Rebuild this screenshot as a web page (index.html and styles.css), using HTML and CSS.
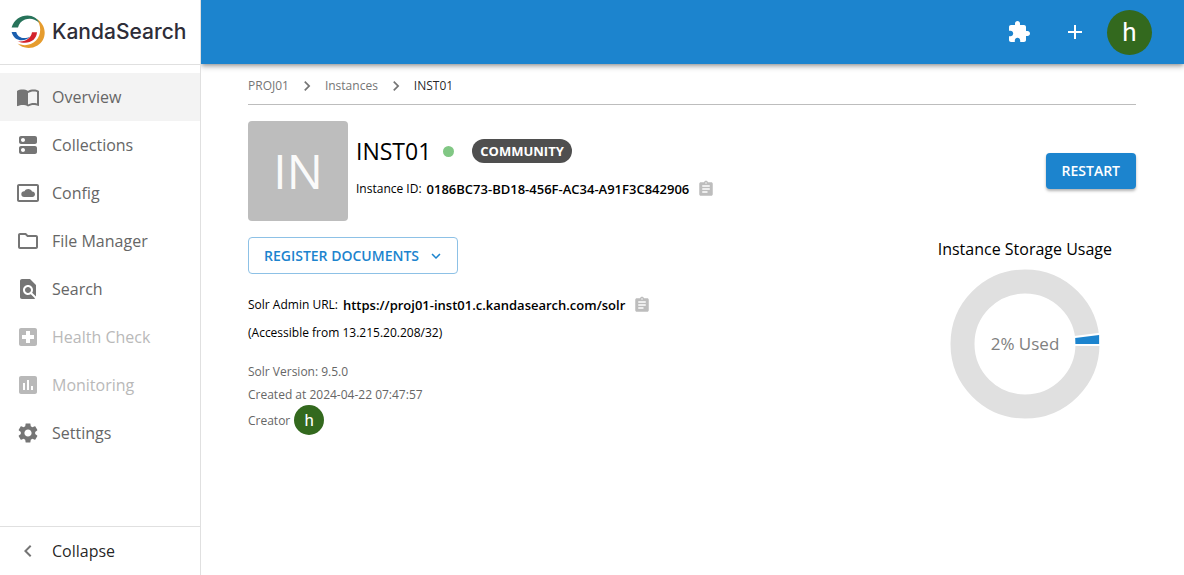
FILE: index.html
```html
<!DOCTYPE html>
<html lang="en">
<head>
<meta charset="utf-8">
<title>INST01 - KandaSearch</title>
<link rel="stylesheet" href="styles.css">
</head>
<body>
<div class="app">
  <aside class="sidebar">
    <a class="brand" href="#">
      <svg class="brand-mark" viewBox="0 0 34 34" aria-hidden="true">
        <path fill="#e69c2e" d="M25.500 3.800C36 10 36.500 24.500 26.500 30.500C19 35 10.500 32.800 6.500 28.600C12 31 20 31 25 25.500C30.500 19.500 30.500 10.500 25.500 3.800Z"/>
        <path fill="#27735a" d="M.6 12.600C3 4.500 9.500 .6 16.500 .6C22 .6 26.300 3.500 28.200 7.800C23.500 3.400 18.500 2.800 14 4.600C9.800 6.300 8 9 7 12.600Z"/>
        <path fill="#1b5fae" d="M.6 17H5.200C6.500 22.300 12.500 25 19.500 21.500C14.500 27 3.500 27.500 .6 17Z"/>
        <path fill="#d3232c" d="M26 17.300C25.500 25.800 16.500 30.500 6.500 26.200C14 27.500 20 23.500 21 17.300Z"/>
      </svg>
      <span class="brand-name">KandaSearch</span>
    </a>
    <nav class="nav">
      <a class="nav-item active" href="#"><svg class="icon" viewBox="0 0 24 24"><path d="M21 5c-1.110-.35-2.330-.5-3.500-.5-1.950 0-4.050.4-5.500 1.500-1.450-1.100-3.550-1.500-5.500-1.500S2.450 4.900 1 6v14.650c0 .25.25.5.5.5.1 0 .15-.05.25-.05C3.100 20.450 5.050 20 6.500 20c1.950 0 4.050.4 5.500 1.500 1.350-.85 3.800-1.500 5.500-1.500 1.650 0 3.350.3 4.750 1.050.1.050.15.050.25.050.25 0 .5-.25.5-.5V6c-.6-.45-1.250-.75-2-1zm0 13.500c-1.100-.35-2.300-.5-3.500-.5-1.700 0-4.150.65-5.500 1.500V8c1.350-.85 3.800-1.500 5.500-1.500 1.200 0 2.400.15 3.500.5v11.500z"/></svg>Overview</a>
      <a class="nav-item" href="#"><svg class="icon" viewBox="0 0 24 24"><path d="M19 13H5c-1.100 0-2 .9-2 2v4c0 1.100.9 2 2 2h14c1.100 0 2-.9 2-2v-4c0-1.100-.9-2-2-2zM7 19c-1.100 0-2-.9-2-2s.9-2 2-2 2 .9 2 2-.9 2-2 2zM19 3H5c-1.100 0-2 .9-2 2v4c0 1.100.9 2 2 2h14c1.100 0 2-.9 2-2V5c0-1.100-.9-2-2-2zM7 9c-1.100 0-2-.9-2-2s.9-2 2-2 2 .9 2 2-.9 2-2 2z"/></svg>Collections</a>
      <a class="nav-item" href="#"><svg class="icon" viewBox="0 0 24 24"><path d="M21 3H3c-1.100 0-2 .9-2 2v14c0 1.100.9 2 2 2h18c1.100 0 2-.9 2-2V5c0-1.100-.9-2-2-2zm0 16H3V5h18v14z"/><path d="M8.200 16h8.100c1.500 0 2.700-1.200 2.700-2.700s-1.200-2.700-2.700-2.700h-.3C15.600 9 14 8 12.200 8c-1.600 0-3 .9-3.700 2.200h-.3A3 3 0 0 0 5.300 13a3 3 0 0 0 2.900 3z"/></svg>Config</a>
      <a class="nav-item" href="#"><svg class="icon" viewBox="0 0 24 24"><path d="m9.170 6 2 2H20v10H4V6h5.170M10 4H4c-1.100 0-1.990.9-1.990 2L2 18c0 1.100.9 2 2 2h16c1.100 0 2-.9 2-2V8c0-1.100-.9-2-2-2h-8l-2-2z"/></svg>File Manager</a>
      <a class="nav-item" href="#"><svg class="icon" viewBox="0 0 24 24"><path d="M20 19.590V8l-6-6H6c-1.100 0-1.990.9-1.990 2L4 20c0 1.100.89 2 1.990 2H18c.45 0 .85-.15 1.190-.4l-4.430-4.430c-.8.52-1.740.83-2.760.83-2.760 0-5-2.240-5-5s2.240-5 5-5 5 2.240 5 5c0 1.020-.31 1.960-.83 2.750L20 19.590zM9 13c0 1.660 1.340 3 3 3s3-1.340 3-3-1.340-3-3-3-3 1.340-3 3z"/></svg>Search</a>
      <a class="nav-item disabled" aria-disabled="true"><svg class="icon" viewBox="0 0 24 24"><path d="M19 3H5c-1.100 0-1.990.9-1.990 2L3 19c0 1.100.9 2 2 2h14c1.100 0 2-.9 2-2V5c0-1.100-.9-2-2-2zm-1 11h-4v4h-4v-4H6v-4h4V6h4v4h4v4z"/></svg>Health Check</a>
      <a class="nav-item disabled" aria-disabled="true"><svg class="icon" viewBox="0 0 24 24"><path d="M19 3H5c-1.100 0-2 .9-2 2v14c0 1.100.9 2 2 2h14c1.100 0 2-.9 2-2V5c0-1.100-.9-2-2-2zM9 17H7v-7h2v7zm4 0h-2V7h2v10zm4 0h-2v-4h2v4z"/></svg>Monitoring</a>
      <a class="nav-item" href="#"><svg class="icon" viewBox="0 0 24 24"><path d="M19.140 12.940c.04-.3.060-.61.060-.94 0-.32-.020-.64-.070-.94l2.030-1.580c.18-.14.23-.41.120-.61l-1.920-3.320c-.12-.22-.37-.29-.59-.22l-2.390.96c-.5-.38-1.030-.7-1.620-.94l-.36-2.540c-.04-.24-.24-.41-.48-.41h-3.840c-.24 0-.43.17-.47.41l-.36 2.540c-.59.24-1.130.57-1.620.94l-2.390-.96c-.22-.08-.47 0-.59.22L2.740 8.870c-.12.21-.08.47.12.61l2.030 1.580c-.05.3-.09.63-.09.94s.02.64.07.94l-2.030 1.580c-.18.14-.23.41-.12.61l1.920 3.320c.12.22.37.29.59.22l2.390-.96c.5.38 1.030.7 1.620.94l.36 2.540c.05.24.24.41.48.41h3.840c.24 0 .44-.17.47-.41l.36-2.540c.59-.24 1.130-.56 1.620-.94l2.390.96c.22.08.47 0 .59-.22l1.920-3.320c.12-.22.07-.47-.12-.61l-2.010-1.580zM12 15.600c-1.980 0-3.600-1.620-3.600-3.600s1.620-3.600 3.600-3.600 3.600 1.620 3.600 3.600-1.620 3.600-3.600 3.600z"/></svg>Settings</a>
    </nav>
    <button class="collapse" type="button"><svg class="icon" viewBox="0 0 24 24"><path d="M15.410 7.410 14 6l-6 6 6 6 1.410-1.410L10.830 12z"/></svg>Collapse</button>
  </aside>

  <div class="page">
    <header class="topbar">
      <button class="icon-button" type="button" aria-label="Extensions"><svg class="icon" viewBox="0 0 24 24"><path d="M20.500 11H19V7c0-1.100-.9-2-2-2h-4V3.500C13 2.120 11.880 1 10.500 1S8 2.120 8 3.500V5H4c-1.100 0-1.990.9-1.990 2v3.800H3.500c1.490 0 2.700 1.210 2.700 2.700s-1.210 2.700-2.700 2.700H2V20c0 1.100.9 2 2 2h3.800v-1.500c0-1.490 1.210-2.700 2.700-2.700 1.490 0 2.700 1.210 2.700 2.700V22H17c1.100 0 2-.9 2-2v-4h1.500c1.380 0 2.500-1.120 2.500-2.500S21.880 11 20.500 11z"/></svg></button>
      <button class="icon-button" type="button" aria-label="Add"><svg class="icon" viewBox="0 0 24 24"><path d="M19 13h-6v6h-2v-6H5v-2h6V5h2v6h6v2z"/></svg></button>
      <button class="avatar avatar-large" type="button">h</button>
    </header>

    <main class="content">
      <nav class="breadcrumbs" aria-label="Breadcrumb">
        <a href="#">PROJ01</a>
        <svg class="chevron" viewBox="0 0 24 24"><path d="M10 6 8.590 7.410 13.170 12l-4.580 4.590L10 18l6-6z"/></svg>
        <a href="#">Instances</a>
        <svg class="chevron" viewBox="0 0 24 24"><path d="M10 6 8.590 7.410 13.170 12l-4.580 4.590L10 18l6-6z"/></svg>
        <span class="current">INST01</span>
      </nav>

      <section class="summary">
        <div class="tile">IN</div>
        <div class="identity">
          <div class="title-row">
            <h1 class="title">INST01</h1>
            <span class="status"></span>
            <span class="chip">COMMUNITY</span>
          </div>
          <div class="field">
            <span>Instance ID:</span>
            <strong class="value">0186BC73-BD18-456F-AC34-A91F3C842906</strong>
            <button class="copy" type="button" aria-label="Copy instance ID"><svg viewBox="0 0 24 24"><path d="M19 3h-4.180C14.400 1.840 13.300 1 12 1c-1.300 0-2.400.84-2.820 2H5c-1.100 0-2 .9-2 2v14c0 1.100.9 2 2 2h14c1.100 0 2-.9 2-2V5c0-1.100-.9-2-2-2zm-7 0c.55 0 1 .45 1 1s-.45 1-1 1-1-.45-1-1 .45-1 1-1zm2 14H7v-2h7v2zm3-4H7v-2h10v2zm0-4H7V7h10v2z"/></svg></button>
          </div>
        </div>
        <button class="restart" type="button">RESTART</button>
      </section>

      <div class="columns">
        <section class="details">
          <button class="register" type="button">REGISTER DOCUMENTS<svg class="caret" viewBox="0 0 24 24"><path d="M7.410 8.590 12 13.170l4.590-4.580L18 10l-6 6-6-6z"/></svg></button>
          <div class="field url">
            <span>Solr Admin URL:</span>
            <strong class="value">https://proj01-inst01.c.kandasearch.com/solr</strong>
            <button class="copy" type="button" aria-label="Copy URL"><svg viewBox="0 0 24 24"><path d="M19 3h-4.180C14.400 1.840 13.300 1 12 1c-1.300 0-2.400.84-2.820 2H5c-1.100 0-2 .9-2 2v14c0 1.100.9 2 2 2h14c1.100 0 2-.9 2-2V5c0-1.100-.9-2-2-2zm-7 0c.55 0 1 .45 1 1s-.45 1-1 1-1-.45-1-1 .45-1 1-1zm2 14H7v-2h7v2zm3-4H7v-2h10v2zm0-4H7V7h10v2z"/></svg></button>
          </div>
          <p class="note">(Accessible from 13.215.20.208/32)</p>
          <div class="meta">
            <p>Solr Version: 9.5.0</p>
            <p>Created at 2024-04-22 07:47:57</p>
            <p class="creator">Creator <span class="avatar avatar-small">h</span></p>
          </div>
        </section>

        <section class="storage">
          <h2 class="storage-title">Instance Storage Usage</h2>
          <svg class="donut" viewBox="0 0 150 150" role="img" aria-label="2% used">
            <circle cx="75" cy="75" r="62.500" fill="none" stroke="#e0e0e0" stroke-width="24"/>
            <path d="M124 67 151 63.500V77H124Z" fill="#fff"/>
            <path d="M125.200 69 149.100 66V75H125.400Z" fill="#1c84ce"/>
            <text x="75" y="81" text-anchor="middle">2% Used</text>
          </svg>
        </section>
      </div>
    </main>
  </div>
</div>
</body>
</html>
```
FILE: styles.css
```css
* {
  box-sizing: border-box;
}

body {
  margin: 0;
  background: #fff;
  color: rgba(0, 0, 0, 0.87);
  font-family: "Open Sans", "Noto Sans", sans-serif;
  font-size: 16px;
  line-height: 24px;
}

h1,
h2,
p {
  margin: 0;
  font-weight: 400;
}

a {
  color: inherit;
  text-decoration: none;
}

button {
  padding: 0;
  border: 0;
  background: none;
  color: inherit;
  font: inherit;
  cursor: pointer;
}

svg {
  display: block;
  flex: none;
  fill: currentColor;
}

.icon {
  width: 24px;
  height: 24px;
}

.app {
  display: flex;
  min-height: 100vh;
}

.sidebar {
  display: flex;
  flex: none;
  flex-direction: column;
  width: 201px;
  border-right: 1px solid #e0e0e0;
  background: #fff;
  z-index: 1;
}

.brand {
  display: flex;
  align-items: center;
  gap: 7px;
  height: 65px;
  padding: 0 11px;
  border-bottom: 1px solid #e0e0e0;
}

.brand-mark {
  width: 34px;
  height: 34px;
}

.brand-name {
  color: #2e2d38;
  font-family: Inter, sans-serif;
  font-size: 21px;
  font-weight: 500;
}

.nav {
  flex: 1;
  padding: 8px 0;
  color: #666;
}

.nav-item,
.collapse {
  display: flex;
  align-items: center;
  gap: 12px;
  height: 48px;
  padding: 0 16px;
}

.nav-item .icon,
.collapse .icon {
  color: #757575;
}

.nav-item.active {
  background: #f3f3f3;
}

.nav-item.disabled,
.nav-item.disabled .icon {
  color: #b9b9b9;
}

.collapse {
  height: 49px;
  border-top: 1px solid #e0e0e0;
}

.page {
  flex: 1;
  min-width: 0;
}

.topbar {
  display: flex;
  align-items: center;
  justify-content: flex-end;
  height: 64px;
  padding: 0 32px;
  background: #1c84ce;
  box-shadow: 0 2px 4px -1px rgba(0, 0, 0, 0.3), 0 3px 6px rgba(0, 0, 0, 0.2);
  color: #fff;
}

.icon-button {
  padding: 12px;
  margin-right: 8px;
}

.avatar {
  display: flex;
  align-items: center;
  justify-content: center;
  border-radius: 50%;
  background: #33691e;
  color: #fff;
  font-family: Roboto, sans-serif;
}

.avatar-large {
  width: 45px;
  height: 45px;
  font-size: 26px;
}

.avatar-small {
  width: 30px;
  height: 30px;
  font-size: 17px;
}

.content {
  padding: 8px 48px 24px 47px;
}

.breadcrumbs {
  display: flex;
  align-items: center;
  gap: 8px;
  height: 33px;
  padding-bottom: 4px;
  border-bottom: 1px solid #bdbdbd;
  color: #757575;
  font-size: 12px;
}

.breadcrumbs .current {
  color: rgba(0, 0, 0, 0.87);
}

.chevron {
  width: 20px;
  height: 20px;
}

.summary {
  display: flex;
  align-items: center;
  gap: 8px;
  margin-top: 16px;
}

.tile {
  display: flex;
  align-items: center;
  justify-content: center;
  width: 100px;
  height: 100px;
  border-radius: 4px;
  background: #bdbdbd;
  color: #fafafa;
  font-size: 48px;
}

.identity {
  flex: 1;
  padding-bottom: 6px;
}

.title-row {
  display: flex;
  align-items: center;
  gap: 12px;
  margin-bottom: 10px;
}

.title {
  color: #000;
  font-size: 23px;
  line-height: 32px;
}

.status {
  width: 11px;
  height: 11px;
  border-radius: 50%;
  background: #81c784;
}

.chip {
  margin-left: 6px;
  padding: 0 8px;
  border-radius: 12px;
  background: #4f4f4f;
  color: #fff;
  font-size: 13px;
  font-weight: 700;
}

.field {
  display: flex;
  align-items: center;
  gap: 5px;
  color: #000;
  font-size: 12px;
}

.value {
  font-size: 13px;
  font-weight: 600;
}

.copy {
  margin-left: 3px;
  color: #bdbdbd;
}

.copy svg {
  width: 18px;
  height: 18px;
}

.restart {
  height: 36px;
  padding: 0 16px;
  border-radius: 4px;
  background: #1c84ce;
  box-shadow: 0 2px 3px rgba(0, 0, 0, 0.3);
  color: #fff;
  font-size: 14px;
  font-weight: 600;
}

.columns {
  display: flex;
  align-items: flex-start;
  justify-content: space-between;
  margin-top: 16px;
}

.register {
  display: flex;
  align-items: center;
  gap: 8px;
  height: 37px;
  padding: 0 12px 0 15px;
  border: 1px solid #8dc1e6;
  border-radius: 4px;
  color: #1c84ce;
  font-size: 14px;
  font-weight: 600;
}

.caret {
  width: 18px;
  height: 18px;
}

.url {
  margin-top: 19px;
}

.note {
  margin-top: 4px;
  color: #000;
  font-size: 12px;
}

.meta {
  margin-top: 15px;
  color: #666;
  font-size: 12px;
  line-height: 23px;
}

.creator {
  display: flex;
  align-items: center;
  gap: 4px;
  margin-top: -1px;
}

.storage {
  display: flex;
  flex-direction: column;
  align-items: center;
  gap: 8px;
  margin-right: 24px;
}

.storage-title {
  color: #000;
  font-size: 16px;
}

.donut {
  width: 150px;
  height: 150px;
}

.donut text {
  fill: #808080;
  font-size: 17px;
}
```
